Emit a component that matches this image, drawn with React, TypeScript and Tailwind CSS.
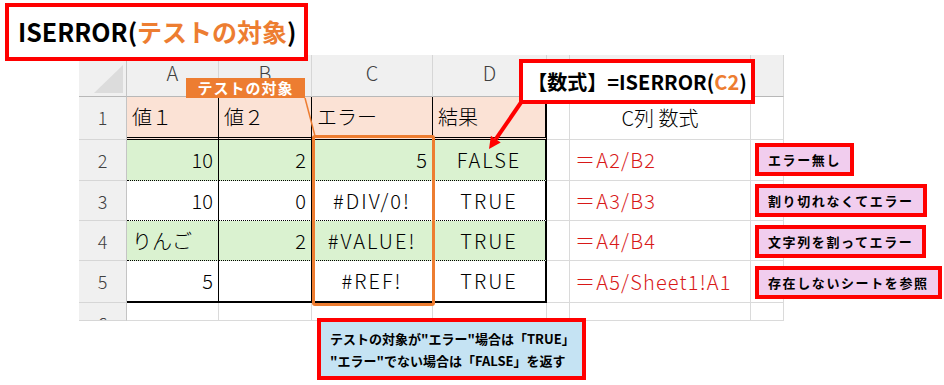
import React from "react";

// E-G headers are hidden under the formula callout in the original
const colLetters = ["A", "B", "C", "D", "", "", ""];

const rows: string[][] = [
  ["値１", "値２", "エラー", "結果", "", "C列 数式", ""],
  ["10", "2", "5", "FALSE", "", "＝A2/B2", ""],
  ["10", "0", "#DIV/0!", "TRUE", "", "＝A3/B3", ""],
  ["りんご", "2", "#VALUE!", "TRUE", "", "＝A4/B4", ""],
  ["5", "", "#REF!", "TRUE", "", "＝A5/Sheet1!A1", ""],
  ["", "", "", "", "", "", ""],
];

const aligns: string[][] = [
  ["l", "l", "l", "l", "l", "c", "l"],
  ["r", "r", "r", "c", "l", "l", "l"],
  ["r", "r", "c", "c", "l", "l", "l"],
  ["l", "r", "c", "c", "l", "l", "l"],
  ["r", "r", "c", "c", "l", "l", "l"],
  ["l", "l", "l", "l", "l", "l", "l"],
];

const notes = [
  "エラー無し",
  "割り切れなくてエラー",
  "文字列を割ってエラー",
  "存在しないシートを参照",
];

function cellClass(r: number, c: number, t: string) {
  const inTable = r <= 4 && c <= 3;
  let right = "border-r border-r-[#dadada]";
  let bottom = "border-b border-b-[#dadada]";
  let bg = "bg-white";
  if (inTable) {
    right = c === 3 ? "border-r-2 border-r-black" : "border-r border-r-black";
    if (r === 0) bottom = "border-b-[3px] border-b-black [border-bottom-style:double]";
    else if (r === 4) bottom = "border-b-2 border-b-black";
    else bottom = "border-b border-b-black [border-bottom-style:dotted]";
    if (r === 0) bg = "bg-[#fbe2d5]";
    else if (r === 1 || r === 3) bg = "bg-[#daf2d0]";
  }
  const a = aligns[r][c];
  const just = a === "r" ? "justify-end" : a === "c" ? "justify-center" : "justify-start";
  const color = c === 5 && r > 0 ? "text-[#d81818]" : "text-black";
  // Excel's font sets latin wider than Noto, so open it up a little
  let track = "";
  if (!/[ぁ-んァ-ン一-龯]/.test(t) && !/^\d*$/.test(t)) {
    track = c === 5 ? "tracking-[1.2px]" : "tracking-[2px]";
  }
  return `${right} ${bottom} ${bg} ${just} ${color} ${track}`;
}

function Sheet() {
  return (
    <div className="grid grid-cols-[48px_92px_93px_121px_114px_23px_181px_33px] grid-rows-[42px_43px_41px_40px_40px_42px_18px] w-[705px] h-[266px] overflow-hidden font-light">
      <div className="relative bg-[#f0f0f0] border-r border-r-[#c4c4c4] border-b border-b-[#b8b8b8]">
        <div className="absolute right-[3px] bottom-[3px] w-[29px] h-[28px] bg-[#dcdcdc] [clip-path:polygon(100%_0,100%_100%,0_100%)]" />
      </div>
      {colLetters.map((l, i) => (
        <div
          key={i}
          className="flex items-center justify-center pb-[5px] bg-[#f0f0f0] border-r border-r-[#d6d6d6] border-b border-b-[#b8b8b8] text-[20px] text-[#404040]"
        >
          {l}
        </div>
      ))}
      {rows.map((row, r) => (
        <React.Fragment key={r}>
          <div className="overflow-hidden bg-[#f0f0f0] border-r border-r-[#c4c4c4] border-b border-b-[#d6d6d6]">
            <div className="h-[41px] flex items-center justify-center text-[18px] text-[#404040]">
              {r + 1}
            </div>
          </div>
          {row.map((t, c) => (
            <div key={c} className={`flex items-center px-[5px] text-[20px] whitespace-nowrap ${cellClass(r, c, t)}`}>
              {t}
            </div>
          ))}
        </React.Fragment>
      ))}
    </div>
  );
}

export default function App() {
  return (
    <div className="relative w-[944px] h-[385px] bg-white overflow-hidden font-['Noto_Sans_CJK_JP',sans-serif]">
      <div className="pl-[79px] pt-[55px]">
        <Sheet />
      </div>

      {/* title */}
      <div className="absolute left-[5px] top-[3px] w-[303px] h-[58px] border-4 border-[#ff0000] bg-white flex items-center pl-[9px] text-[25px] font-bold text-black whitespace-nowrap">
        ISERROR(<span className="text-[#ed7d31]">テストの対象</span>)
      </div>

      {/* target label + frame */}
      <div className="absolute left-[186px] top-[78px] w-[119px] h-[20px] bg-[#ed7d31] text-white text-[15px] font-bold tracking-[1px] flex items-center justify-center">
        テストの対象
      </div>
      <div className="absolute left-[312px] top-[135px] w-[123px] h-[171px] border-[3px] border-[#ed7d31] rounded-[3px]" />

      {/* formula callout */}
      <div className="absolute left-[519px] top-[59px] w-[236px] h-[45px] border-4 border-[#ff0000] bg-white flex items-center justify-center text-[20px] font-bold text-black whitespace-nowrap">
        【数式】=ISERROR(<span className="text-[#ed7d31]">C2</span>)
      </div>

      <svg className="absolute left-0 top-0 pointer-events-none" width="944" height="385">
        <line x1="305" y1="98" x2="315" y2="136" stroke="#ed7d31" strokeWidth="1.5" />
        <line x1="522" y1="101" x2="495.8" y2="139.1" stroke="#ff0000" strokeWidth="4" />
        <polygon points="489,149 500.7,142.5 490.9,135.7" fill="#ff0000" />
      </svg>

      {/* notes */}
      <div className="absolute left-[755px] top-[143px] flex flex-col items-start gap-[8px]">
        {notes.map((n) => (
          <div
            key={n}
            className="h-[33px] border-4 border-[#ff0000] bg-[#f1cdee] px-[9px] flex items-center text-[13px] font-bold tracking-[1.6px] text-black whitespace-nowrap"
          >
            {n}
          </div>
        ))}
      </div>

      {/* explanation */}
      <div className="absolute left-[317px] top-[318px] w-[269px] h-[62px] border-4 border-[#ff0000] bg-[#c5e3f3] pl-[9px] pt-[6px] text-[13px] leading-[22px] font-bold text-black whitespace-nowrap">
        <div>テストの対象が"エラー"場合は「TRUE」</div>
        <div>"エラー"でない場合は「FALSE」を返す</div>
      </div>
    </div>
  );
}
